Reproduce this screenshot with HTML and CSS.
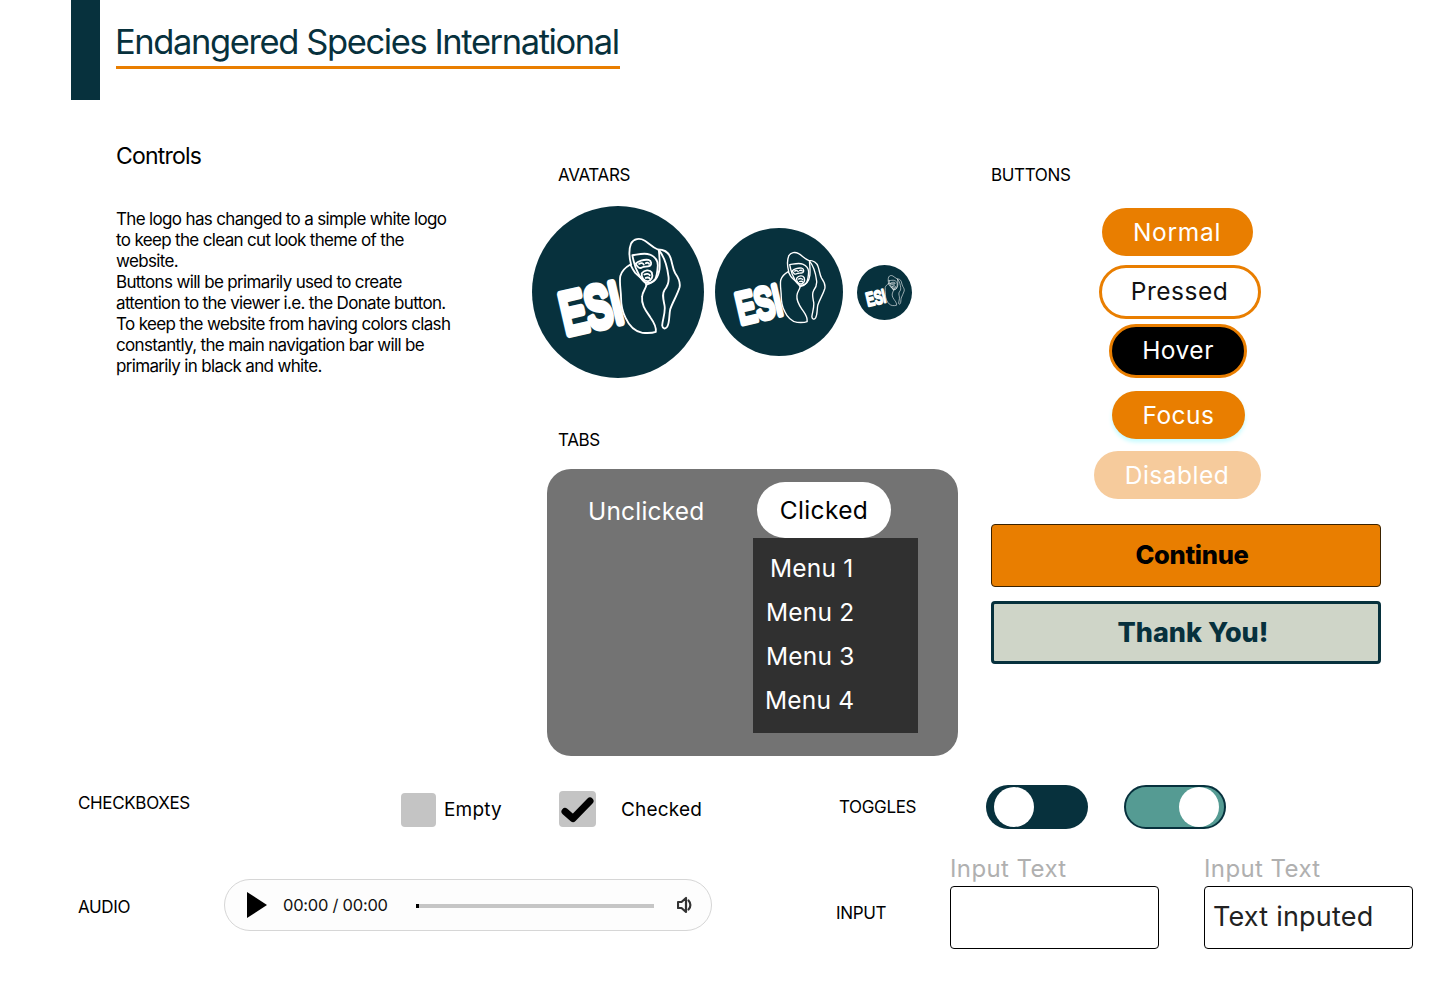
FILE: index.html
```html
<!DOCTYPE html>
<html lang="en">
<head>
<meta charset="utf-8">
<title>Endangered Species International</title>
<link rel="stylesheet" href="styles.css">
</head>
<body>
<svg class="defs" width="0" height="0" aria-hidden="true">
  <symbol id="gorilla" viewBox="36 33 514 514">
    <g fill="none" stroke="#fff" stroke-width="5.5" stroke-linejoin="round" stroke-linecap="round">
      <path d="M332 208C326 185 326 160 332 145C340 130 358 128 372 136C385 143 395 156 412 163C430 163 444 170 450 188C456 205 456 220 464 234C474 248 480 262 477 276C470 300 456 320 449 342C445 360 448 380 440 394C434 402 426 400 425 390C426 372 436 350 432 330C428 310 424 296 432 284C442 272 446 262 444 245C441 220 436 190 415 165"/>
      <path d="M330 208C316 216 304 228 300 242C296 262 302 285 302 306C302 330 306 350 316 368C326 390 344 408 366 412C380 413 396 413 406 409C408 395 400 380 390 366C378 348 362 330 365 304C366 288 376 282 378 268C372 252 354 244 344 232C338 224 334 216 330 208"/>
      <path d="M336 180C352 178 372 172 388 178C402 184 412 194 412 210C411 226 410 240 404 252C398 262 384 266 372 260C358 250 352 230 346 218C342 206 338 194 336 180Z"/>
      <path d="M346 205C352 198 370 192 384 194C394 197 394 208 388 212C378 216 372 212 366 216C358 222 350 216 346 205Z"/>
      <path d="M364 234C372 224 388 222 394 232C398 244 394 256 382 258C370 258 362 246 364 234Z"/>
      <path d="M356 206C362 202 368 204 370 208M376 204C380 201 386 203 386 206M372 238C378 234 386 236 388 240M376 248C380 246 386 246 388 250"/>
      <path d="M378 268C404 262 414 246 417 222C419 204 417 184 415 165"/>
    </g>
  </symbol>
</svg>

<header class="header">
  <div class="header-bar"></div>
  <h1 class="title">Endangered Species International</h1>
</header>

<main class="board">
  <section class="top">
    <div class="intro">
      <h2 class="intro-title">Controls</h2>
      <p class="intro-text">The logo has changed to a simple white logo<br>to keep the clean cut look theme of the<br>website.<br>Buttons will be primarily used to create<br>attention to the viewer i.e. the Donate button.<br>To keep the website from having colors clash<br>constantly, the main navigation bar will be<br>primarily in black and white.</p>
    </div>

    <div class="middle">
      <h3 class="label label-inset">AVATARS</h3>
      <div class="avatars">
        <svg class="avatar avatar-l" viewBox="36 33 514 514" role="img" aria-label="ESI logo">
          <circle cx="293" cy="290" r="257" fill="#07313d"/>
          <text class="esi-text" transform="translate(137 418) rotate(-13) scale(1 1.55)">ESI</text>
          <use href="#gorilla" x="36" y="33" width="514" height="514"/>
        </svg>
        <svg class="avatar avatar-m" viewBox="36 33 514 514" role="img" aria-label="ESI logo">
          <circle cx="293" cy="290" r="257" fill="#07313d"/>
          <text class="esi-text" transform="translate(137 418) rotate(-13) scale(1 1.55)">ESI</text>
          <use href="#gorilla" x="36" y="33" width="514" height="514"/>
        </svg>
        <svg class="avatar avatar-s" viewBox="36 33 514 514" role="img" aria-label="ESI logo">
          <circle cx="293" cy="290" r="257" fill="#07313d"/>
          <text class="esi-text" transform="translate(137 418) rotate(-13) scale(1 1.55)">ESI</text>
          <use href="#gorilla" x="36" y="33" width="514" height="514"/>
        </svg>
      </div>
      <h3 class="label label-inset label-tabs">TABS</h3>
      <div class="tabs">
        <div class="tab-row">
          <span class="tab">Unclicked</span>
          <span class="tab tab-active">Clicked</span>
        </div>
        <ul class="menu">
          <li class="menu-item menu-one">Menu 1</li>
          <li class="menu-item">Menu 2</li>
          <li class="menu-item">Menu 3</li>
          <li class="menu-item menu-four">Menu 4</li>
        </ul>
      </div>
    </div>

    <div class="right">
      <h3 class="label">BUTTONS</h3>
      <div class="pills">
        <span class="pill pill-normal">Normal</span>
        <span class="pill pill-pressed">Pressed</span>
        <span class="pill pill-hover">Hover</span>
        <span class="pill pill-focus">Focus</span>
        <span class="pill pill-disabled">Disabled</span>
      </div>
      <div class="cta cta-continue">Continue</div>
      <div class="cta cta-thanks">Thank You!</div>
    </div>
  </section>

  <section class="row-controls">
    <h3 class="label label-check">CHECKBOXES</h3>
    <div class="check">
      <span class="box box-empty"></span>
      <span class="check-text">Empty</span>
    </div>
    <div class="check check-on">
      <span class="box box-checked">
        <svg class="tick" viewBox="0 0 37 36"><path d="M6 20.5L14 27.5L31 10" fill="none" stroke="#000" stroke-width="7" stroke-linecap="round" stroke-linejoin="round"/></svg>
      </span>
      <span class="check-text">Checked</span>
    </div>
    <h3 class="label">TOGGLES</h3>
    <div class="toggle toggle-off"><span class="knob"></span></div>
    <div class="toggle toggle-on"><span class="knob"></span></div>
  </section>

  <section class="row-inputs">
    <h3 class="label label-audio">AUDIO</h3>
    <div class="audio">
      <svg class="play" viewBox="0 0 20 26"><path d="M0 0L20 13L0 26Z" fill="#000"/></svg>
      <span class="time">00:00 / 00:00</span>
      <span class="track"><span class="track-dot"></span></span>
      <svg class="speaker" viewBox="0 0 16 18"><path d="M1 6H4.5L9 2V16L4.5 12H1Z" fill="none" stroke="#333" stroke-width="2.2" stroke-linejoin="round"/><path d="M11.5 4.5C14 7 14 11 11.5 13.5" fill="none" stroke="#333" stroke-width="2.2" stroke-linecap="round"/></svg>
    </div>
    <h3 class="label label-input">INPUT</h3>
    <div class="field">
      <span class="field-label">Input Text</span>
      <div class="field-box"></div>
    </div>
    <div class="field">
      <span class="field-label">Input Text</span>
      <div class="field-box">Text inputed</div>
    </div>
  </section>
</main>
</body>
</html>
```

FILE: styles.css
```css
* { box-sizing: border-box; }
html, body { margin: 0; padding: 0; }
body {
  width: 1440px;
  min-height: 996px;
  background: #fff;
  color: #000;
  font-family: Inter, "Liberation Sans", sans-serif;
}
h1, h2, h3, p, ul { margin: 0; padding: 0; font-weight: 400; }
ul { list-style: none; }
.defs { display: block; height: 0; }

.header { display: flex; height: 100px; padding-left: 71px; }
.header-bar { width: 29px; height: 100px; background: #07313d; }
.title {
  margin: 20px 0 0 16px;
  height: 49px;
  width: 504px;
  border-bottom: 3px solid #e97e00;
  color: #07313d;
  font-size: 34.5px;
  line-height: 44px;
  letter-spacing: -1.4px;
  text-indent: -1px;
  white-space: nowrap;
}

.top { display: flex; height: 656px; }
.intro { width: 532px; padding: 42px 0 0 116px; }
.intro-title { font-size: 23px; line-height: 28px; letter-spacing: -0.8px; }
.intro-text {
  margin-top: 39px;
  font-size: 17px;
  line-height: 21px;
  letter-spacing: -0.66px;
}

.label {
  font-size: 17px;
  line-height: 20px;
  letter-spacing: -0.35px;
  white-space: nowrap;
}
.middle { width: 459px; padding-top: 65px; }
.label-inset { margin-left: 26px; }
.avatars { display: flex; align-items: center; margin-top: 21px; height: 172px; }
.avatar { display: block; flex: none; }
.avatar-l { width: 172px; height: 172px; }
.avatar-m { width: 128px; height: 128px; margin-left: 11px; }
.avatar-s { width: 55px; height: 55px; margin-left: 14px; }
.label-tabs { margin-top: 52px; }

.tabs {
  width: 411px;
  height: 287px;
  margin: 19px 0 0 15px;
  padding: 13px 40px 0 206px;
  background: #737373;
  border-radius: 24px;
  color: #fff;
}
.tab-row { display: flex; height: 56px; }
.tab { font-size: 24.5px; letter-spacing: 0.2px; line-height: 56px; white-space: nowrap; }
.tab:first-child { margin-left: -165px; width: 169px; padding-top: 1px; }
.tab-active {
  width: 134px;
  height: 56px;
  background: #fff;
  color: #000;
  border-radius: 28px;
  text-align: center;
  letter-spacing: 0.35px;
}
.menu {
  width: 165px;
  height: 195px;
  background: #303030;
  padding-top: 8px;
}
.menu-item {
  height: 44px;
  padding-left: 13px;
  font-size: 24.5px;
  line-height: 44px;
  letter-spacing: 0.2px;
  white-space: nowrap;
}
.menu-one { padding-left: 17px; }
.menu-four { padding-left: 12px; }

.right { width: 390px; padding-top: 65px; }
.pills { display: flex; flex-direction: column; align-items: center; padding: 23px 18px 0 0; }
.pill {
  display: flex;
  align-items: center;
  justify-content: center;
  height: 48px;
  padding-bottom: 1px;
  border-radius: 27px;
  font-size: 24.5px;
  letter-spacing: 0.5px;
  color: #fff;
  background: #e97e00;
}
.pill-normal { width: 151px; letter-spacing: 0.7px; }
.pill-pressed { width: 162px; height: 54px; margin: 9px 0 0 5px; padding-bottom: 2px; background: #fff; color: #111; border: 3px solid #e97e00; }
.pill-hover { width: 138px; height: 54px; margin: 5px 0 0 2px; padding-bottom: 2px; background: #000; border: 3px solid #e97e00; }
.pill-focus { width: 133px; margin: 13px 0 0 3px; box-shadow: 0 3px 4px #c4fbff; }
.pill-disabled { width: 167px; margin-top: 12px; background: #f6cb9c; }

.cta {
  display: flex;
  align-items: center;
  justify-content: center;
  width: 390px;
  height: 63px;
  border-radius: 4px;
  font-weight: 800;
  white-space: nowrap;
}
.cta-continue {
  margin-top: 25px;
  padding: 0 0 2px 12px;
  background: #e97e00;
  border: 1px solid #3a2200;
  font-size: 25.5px;
  letter-spacing: -0.3px;
}
.cta-thanks {
  margin-top: 14px;
  padding-left: 14px;
  background: #cfd5c8;
  border: 3px solid #07313d;
  color: #07313d;
  font-size: 27px;
  letter-spacing: 0;
}

.row-controls {
  display: grid;
  grid-template-columns: 323px 158px 280px 147px 138px 102px;
  align-items: center;
  height: 44px;
  margin-top: 29px;
  padding-left: 78px;
}
.label-check { margin-bottom: 8px; }
.check { display: flex; align-items: center; }
.box { display: block; flex: none; background: #c4c4c4; border-radius: 4px; }
.box-empty { width: 35px; height: 34px; margin-top: 6px; }
.box-checked { width: 37px; height: 36px; margin-top: 4px; }
.tick { display: block; width: 37px; height: 36px; }
.check-text { font-size: 19px; letter-spacing: 0.2px; margin-left: 8px; margin-top: 4px; }
.check-on .check-text { margin-left: 25px; }

.toggle { width: 102px; height: 44px; border-radius: 22px; padding: 2px 8px; display: flex; }
.toggle-off { background: #07313d; }
.toggle-on { background: #559b93; border: 2px solid #07313d; padding: 0 5px 0 0; justify-content: flex-end; }
.knob { display: block; width: 40px; height: 40px; border-radius: 50%; background: #fff; }

.row-inputs {
  display: grid;
  grid-template-columns: 146px 612px 114px 254px 209px;
  align-items: end;
  margin-top: 26px;
  padding-left: 78px;
}
.label-audio { margin-bottom: 32px; }
.label-input { margin-bottom: 26px; }
.audio {
  display: flex;
  align-items: center;
  width: 488px;
  height: 52px;
  margin-bottom: 18px;
  padding-left: 22px;
  border: 1px solid #d6d6d6;
  border-radius: 26px;
  background: #fdfdfd;
}
.play { width: 20px; height: 26px; flex: none; }
.time { margin-left: 16px; width: 133px; font-size: 16.5px; letter-spacing: -0.25px; white-space: nowrap; color: #111; }
.track { position: relative; display: block; width: 238px; height: 4px; margin-top: 1px; background: #c6c6c6; }
.track-dot { position: absolute; left: 0; top: 0; width: 3px; height: 4px; background: #000; }
.speaker { width: 16px; height: 18px; margin-left: 23px; flex: none; }

.field { width: 209px; }
.field-label { display: block; height: 31px; font-size: 24px; line-height: 28px; letter-spacing: 0.4px; color: #b0b0b0; white-space: nowrap; }
.field-box {
  height: 63px;
  padding-left: 8px;
  border: 1px solid #000;
  border-radius: 4px;
  font-size: 27px;
  line-height: 60px;
  letter-spacing: 0.2px;
  color: #222;
  white-space: nowrap;
}

.esi-text {
  font-family: "Liberation Sans", sans-serif;
  font-weight: 400;
  font-size: 112px;
  letter-spacing: 1px;
  fill: #fff;
  stroke: #fff;
  stroke-width: 16px;
  stroke-linejoin: round;
}
```
